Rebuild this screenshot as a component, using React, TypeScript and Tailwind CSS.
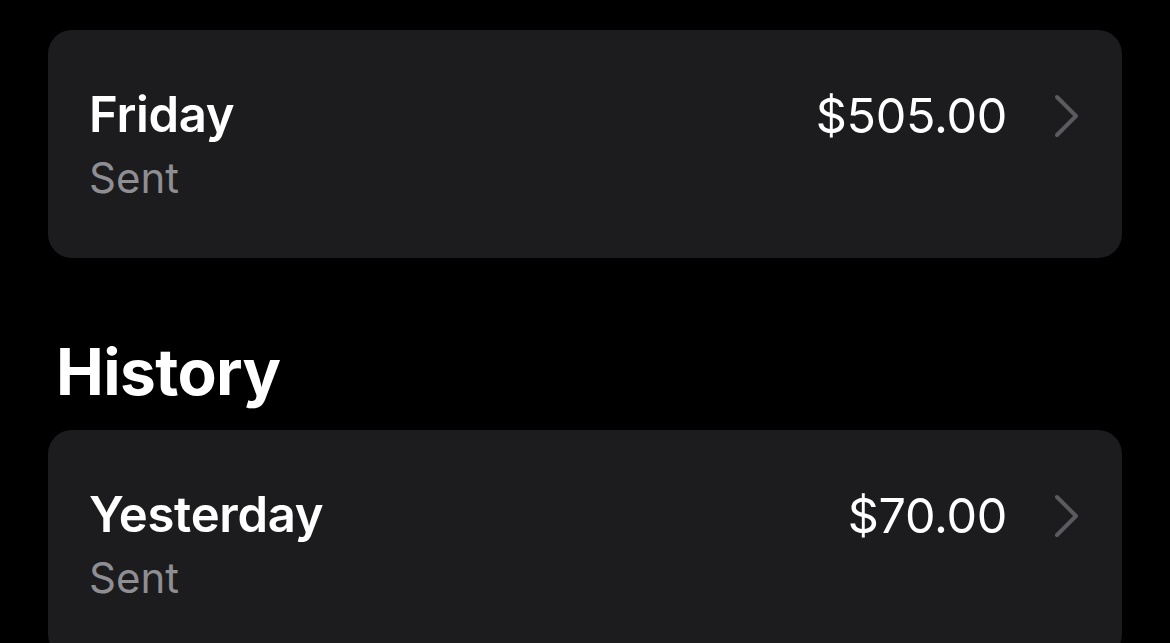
import React from "react";

function Chevron() {
  return (
    <svg width="26" height="44" viewBox="0 0 26 44" className="ml-[47px] shrink-0" fill="none">
      <polyline points="3,3 22,22 3,41" stroke="#5b5b5f" strokeWidth="4" strokeLinecap="round" strokeLinejoin="round" />
    </svg>
  );
}

function Row({ title, amount }: { title: string; amount: string }) {
  return (
    <div className="h-[228px] rounded-[24px] bg-[#1c1c1e] flex items-center pl-[41px] pr-[42px]">
      <div className="flex flex-col flex-1 pt-[3px]">
        <div className="text-[49px] leading-[64px] font-semibold text-white tracking-[-0.3px]">{title}</div>
        <div className="text-[42px] leading-[61px] text-[#8e8e93]">Sent</div>
      </div>
      <div className="flex items-center -mt-[56px]">
        <div className="text-[48.5px] leading-[64px] text-white tracking-[-0.3px]">{amount}</div>
        <Chevron />
      </div>
    </div>
  );
}

export default function App() {
  return (
    <div
      className="min-h-screen bg-black px-[48px] pt-[30px] overflow-hidden h-[643px]"
      style={{ fontFamily: "Inter, 'Noto Sans', sans-serif" }}
    >
      <Row title="Friday" amount="$505.00" />
      <h2 className="mt-[76px] mb-[20px] pl-[8px] text-[64px] leading-[76px] font-bold text-white tracking-[-0.6px]">History</h2>
      <Row title="Yesterday" amount="$70.00" />
    </div>
  );
}
